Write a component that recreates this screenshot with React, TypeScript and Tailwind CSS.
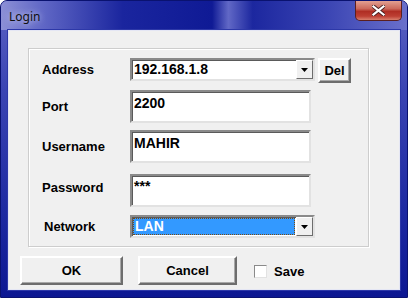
export default function App() {
  const label = "w-[88px] text-[13px] font-bold text-black";
  const sunken =
    "border-2 border-t-[#8a8a8a] border-l-[#8a8a8a] border-r-[#e2e2e2] border-b-[#e2e2e2] shadow-[inset_1px_1px_0_#5a5a5a] bg-white";
  const raised =
    "border-2 border-t-white border-l-white border-r-[#6d6d6d] border-b-[#6d6d6d] shadow-[inset_-1px_-1px_0_#a8a8a8] bg-[#f0f0f0] flex items-center justify-center text-[13px] font-bold text-black";

  const Arrow = () => (
    <div className="w-[17px] h-full border border-t-white border-l-white border-r-[#6d6d6d] border-b-[#6d6d6d] bg-[#f0f0f0] flex items-center justify-center">
      <svg width="7" height="4" viewBox="0 0 7 4">
        <path d="M0 0h7L3.5 4z" fill="#000" />
      </svg>
    </div>
  );

  return (
    <div
      className="w-[408px] h-[298px] flex flex-col rounded-t-[7px] border border-[#0a1270] bg-[linear-gradient(to_bottom,#5c63c4_0%,#3a44b3_30%,#1e2aa2_70%,#0c1792_100%)] overflow-hidden"
      style={{ fontFamily: '"Liberation Sans", Arial, sans-serif' }}
    >
      {/* title bar */}
      <div className="h-[29px] flex items-start shrink-0 bg-[linear-gradient(to_right,#8c90d6_0%,#6168c6_10%,#1a259e_30%,#0f1a95_52%,#6168c6_56%,#1c279f_62%,#3a44b3_80%,#6a70cb_100%)]">
        <span
          className="pl-[8px] pt-[7px] text-[12px] text-[#101010] [text-shadow:0_0_6px_#dfe3ff]"
          style={{ fontFamily: '"Noto Sans", sans-serif' }}
        >
          Login
        </span>
        <div className="ml-auto mr-[5px] w-[47px] h-[20px] rounded-b-[5px] border border-t-0 border-[#5b1f1f] bg-[linear-gradient(to_bottom,#e2a092_0%,#cc6a5c_40%,#b02e24_55%,#bd3f33_80%,#d9806e_100%)] flex items-center justify-center">
          <svg width="13" height="11" viewBox="0 0 13 11">
            <path
              d="M1.5 1.5l10 8M11.5 1.5l-10 8"
              stroke="#4a2020"
              strokeWidth="4"
              strokeLinecap="square"
            />
            <path
              d="M1.5 1.5l10 8M11.5 1.5l-10 8"
              stroke="#ffffff"
              strokeWidth="2.2"
              strokeLinecap="square"
            />
          </svg>
        </div>
      </div>

      {/* client */}
      <div className="mx-[7px] h-[260px] shrink-0 border border-[#e4e6f4] bg-[#f0f0f0] flex flex-col pl-[11px] pt-[17px] shadow-[0_0_0_1px_#2d38a8]">
        <div className="ml-[8px] w-[341px] h-[199px] border border-[#cdcdcd] shadow-[inset_1px_1px_0_#ffffff,1px_1px_0_#ffffff] flex flex-col pl-[13px] pt-[9px]">
          {/* Address */}
          <div className="flex items-start h-[25px]">
            <div className={`${label} h-[23px] flex items-center`}>Address</div>
            <div className={`${sunken} w-[185px] h-[23px] flex items-stretch`}>
              <div className="flex-1 pl-[2px] flex items-center text-[14px] font-bold text-black">
                192.168.1.8
              </div>
              <Arrow />
            </div>
            <div className={`${raised} ml-[3px] w-[33px] h-[25px]`}>Del</div>
          </div>

          {/* Port */}
          <div className="flex items-center mt-[7px]">
            <div className={label}>Port</div>
            <div className={`${sunken} w-[181px] h-[33px] pl-[2px] pt-[3px] text-[14px] font-bold text-black leading-[16px]`}>
              2200
            </div>
          </div>

          {/* Username */}
          <div className="flex items-center mt-[7px]">
            <div className={label}>Username</div>
            <div className={`${sunken} w-[181px] h-[33px] pl-[2px] pt-[3px] text-[14px] font-bold text-black leading-[16px]`}>
              MAHIR
            </div>
          </div>

          {/* Password */}
          <div className="flex items-start mt-[11px]">
            <div className={`${label} pt-[4px]`}>Password</div>
            <div className={`${sunken} w-[181px] h-[33px] pl-[2px] pt-[2px] text-[14px] font-bold text-black leading-[16px]`}>
              ***
            </div>
          </div>

          {/* Network */}
          <div className="flex items-center mt-[8px]">
            <div className={`${label} pl-[2px]`}>Network</div>
            <div className={`${sunken} w-[185px] h-[23px] flex items-stretch`}>
              <div className="flex-1 p-[1px]">
                <div className="h-full bg-[#3399ff] outline outline-1 outline-dotted outline-[#7a4a10] -outline-offset-1 pl-[2px] flex items-center text-[14px] font-bold text-white">
                  LAN
                </div>
              </div>
              <Arrow />
            </div>
          </div>
        </div>

        {/* buttons */}
        <div className="flex items-start mt-[9px]">
          <div className={`${raised} w-[103px] h-[29px]`}>OK</div>
          <div className={`${raised} ml-[15px] w-[99px] h-[29px]`}>Cancel</div>
          <div className="ml-[17px] mt-[6px] flex items-center">
            <div className="w-[13px] h-[13px] border border-t-[#8a8a8a] border-l-[#8a8a8a] border-r-[#e2e2e2] border-b-[#e2e2e2] bg-white" />
            <span className="ml-[7px] text-[13px] font-bold text-black">Save</span>
          </div>
        </div>
      </div>
    </div>
  );
}
